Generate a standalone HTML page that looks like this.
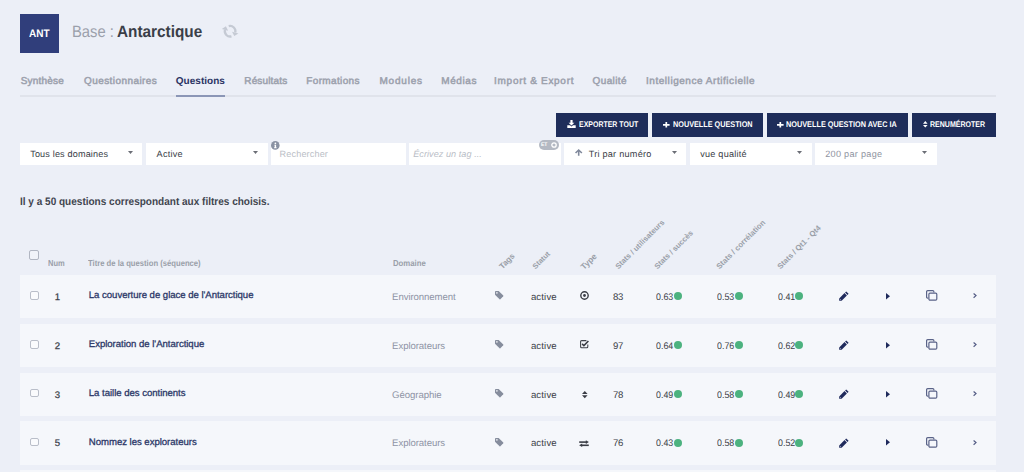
<!DOCTYPE html><html><head><meta charset="utf-8"><style>
html,body{margin:0;padding:0;width:1024px;height:472px;overflow:hidden;background:#eceff7;}
body{position:relative;font-family:"Liberation Sans", sans-serif;text-rendering:geometricPrecision;}
.t{position:absolute;line-height:0;white-space:nowrap;}
.b{position:absolute;}
svg{position:absolute;overflow:visible;}
</style></head><body>
<div class="b" style="left:20.3px;top:14.3px;width:38.3px;height:38.3px;background:#303e7b"></div>
<svg style="left:219px;top:22px" width="22" height="18" viewBox="0 0 22 18"><g fill="none" stroke="#c5cad4" stroke-width="2.3"><path d="M9.73 4.08 A5.3 5.3 0 0 1 16.22 10.57"/><path d="M12.47 14.32 A5.3 5.3 0 0 1 5.98 7.83"/></g><g fill="#c5cad4"><path d="M19.41 11.42 L13.03 9.72 L15.29 14.05 Z"/><path d="M2.79 6.98 L9.17 8.68 L6.91 4.35 Z"/></g></svg>
<div class="b" style="left:20px;top:95.2px;width:976px;height:1.6px;background:#e0e3eb"></div>
<div class="b" style="left:175.5px;top:94.8px;width:49.5px;height:2px;background:#8b96b6"></div>
<div class="b" style="left:556.4px;top:112.8px;width:91.8px;height:23.8px;background:#1e2d5a"></div>
<div class="b" style="left:652px;top:112.8px;width:110.9px;height:23.8px;background:#1e2d5a"></div>
<div class="b" style="left:766.6px;top:112.8px;width:141.4px;height:23.8px;background:#1e2d5a"></div>
<div class="b" style="left:912px;top:112.8px;width:84.0px;height:23.8px;background:#1e2d5a"></div>
<svg style="left:567px;top:119.5px" width="9" height="8" viewBox="0 0 9 8"><path d="M3.4 0 H5.6 V2.8 H7.4 L4.5 5.6 L1.6 2.8 H3.4 Z" fill="#fff"/><path d="M0.3 5.3 H3 L4.5 6.6 L6 5.3 H8.7 V8 H0.3 Z" fill="#fff"/></svg>
<svg style="left:662.7px;top:121.6px" width="6.6" height="5.6" viewBox="0 0 6.6 5.6"><path d="M2.45 0 H4.15 V1.95 H6.6 V3.65 H4.15 V5.6 H2.45 V3.65 H0 V1.95 H2.45 Z" fill="#fff"/></svg>
<svg style="left:777px;top:121.6px" width="6.6" height="5.6" viewBox="0 0 6.6 5.6"><path d="M2.45 0 H4.15 V1.95 H6.6 V3.65 H4.15 V5.6 H2.45 V3.65 H0 V1.95 H2.45 Z" fill="#fff"/></svg>
<svg style="left:922.8px;top:120.8px" width="4.6" height="6.6" viewBox="0 0 4.6 6.6"><path d="M2.3 0 L4.6 2.7 H0 Z M0 3.9 H4.6 L2.3 6.6 Z" fill="#fff"/></svg>
<div class="b" style="left:20.1px;top:142.8px;width:121.80px;height:22.2px;background:#fff"></div>
<div class="b" style="left:145.9px;top:142.8px;width:122.17px;height:22.2px;background:#fff"></div>
<div class="b" style="left:270.8px;top:142.8px;width:135.20px;height:22.2px;background:#fff"></div>
<div class="b" style="left:408.8px;top:142.8px;width:151.90px;height:22.2px;background:#fff"></div>
<div class="b" style="left:563.9px;top:142.8px;width:121.70px;height:22.2px;background:#fff"></div>
<div class="b" style="left:690.1px;top:142.8px;width:121.70px;height:22.2px;background:#fff"></div>
<div class="b" style="left:814.5px;top:142.8px;width:122.00px;height:22.2px;background:#fff"></div>
<svg style="left:127.8px;top:150.8px" width="5" height="3" viewBox="0 0 5 3"><path d="M0 0 H5 L2.5 3 Z" fill="#6b6e76"/></svg>
<svg style="left:253.2px;top:150.8px" width="5" height="3" viewBox="0 0 5 3"><path d="M0 0 H5 L2.5 3 Z" fill="#6b6e76"/></svg>
<svg style="left:671.8px;top:150.8px" width="5" height="3" viewBox="0 0 5 3"><path d="M0 0 H5 L2.5 3 Z" fill="#6b6e76"/></svg>
<svg style="left:796.9px;top:150.8px" width="5" height="3" viewBox="0 0 5 3"><path d="M0 0 H5 L2.5 3 Z" fill="#6b6e76"/></svg>
<svg style="left:922.2px;top:150.8px" width="5" height="3" viewBox="0 0 5 3"><path d="M0 0 H5 L2.5 3 Z" fill="#6b6e76"/></svg>
<svg style="left:271px;top:141px" width="8.6" height="8.8" viewBox="0 0 10 10"><circle cx="5" cy="5" r="5" fill="#8a92a3"/><circle cx="5.1" cy="2.6" r="1" fill="#fff"/><path d="M3.9 4.2 H5.9 V7.2 H6.5 V8.2 H3.6 V7.2 H4.3 V5.2 H3.9 Z" fill="#fff"/></svg>
<div class="b" style="left:538.6px;top:139.7px;width:20.6px;height:10.1px;border-radius:5px;background:#b4b9c3"></div>
<div class="t" style="left:541px;top:144.8px;font-size:5px;font-weight:700;color:#fff;letter-spacing:-0.2px">ET</div>
<svg style="left:551px;top:141.6px" width="6" height="6" viewBox="0 0 6 6"><circle cx="3" cy="3" r="2.2" fill="none" stroke="#fff" stroke-width="1.3"/></svg>
<svg style="left:574.5px;top:149px" width="7.4" height="6.8" viewBox="0 0 7.4 6.8"><path d="M3.7 0 L7.4 3.5 L6.3 4.5 L4.5 2.8 V6.8 H2.9 V2.8 L1.1 4.5 L0 3.5 Z" fill="#7f889b"/></svg>
<div class="b" style="left:29.2px;top:250.2px;width:9.9px;height:9.7px;box-sizing:border-box;border:1.1px solid #b1b6c2;border-radius:2px;background:#f1f3f9"></div>
<div class="t" style="left:29.40px;top:34.00px;font-size:10.8px;color:#ffffff;transform:scaleX(0.9273);transform-origin:0 0;font-weight:700;">ANT</div>
<div class="t" style="left:71.90px;top:32.00px;font-size:16.5px;color:#9ba0ab;transform:scaleX(0.8956);transform-origin:0 0;">Base :</div>
<div class="t" style="left:117.47px;top:32.00px;font-size:16.5px;color:#3a3e48;transform:scaleX(0.9289);transform-origin:0 0;font-weight:700;">Antarctique</div>
<div class="t" style="left:20.70px;top:82.30px;font-size:10.0px;color:#9ca1ad;letter-spacing:0.214px;-webkit-text-stroke:0.5px #9ca1ad;">Synthèse</div>
<div class="t" style="left:84.00px;top:82.30px;font-size:10.0px;color:#9ca1ad;letter-spacing:0.423px;-webkit-text-stroke:0.5px #9ca1ad;">Questionnaires</div>
<div class="t" style="left:175.75px;top:82.30px;font-size:10.0px;color:#2b3464;letter-spacing:0.032px;font-weight:700;">Questions</div>
<div class="t" style="left:244.25px;top:82.30px;font-size:10.0px;color:#9ca1ad;letter-spacing:0.157px;-webkit-text-stroke:0.5px #9ca1ad;">Résultats</div>
<div class="t" style="left:306.25px;top:82.30px;font-size:10.0px;color:#9ca1ad;letter-spacing:0.361px;-webkit-text-stroke:0.5px #9ca1ad;">Formations</div>
<div class="t" style="left:379.50px;top:82.30px;font-size:10.0px;color:#9ca1ad;letter-spacing:0.792px;-webkit-text-stroke:0.5px #9ca1ad;">Modules</div>
<div class="t" style="left:441.25px;top:82.30px;font-size:10.0px;color:#9ca1ad;letter-spacing:0.6px;-webkit-text-stroke:0.5px #9ca1ad;">Médias</div>
<div class="t" style="left:494.10px;top:82.30px;font-size:10.0px;color:#9ca1ad;letter-spacing:0.706px;-webkit-text-stroke:0.5px #9ca1ad;">Import &amp; Export</div>
<div class="t" style="left:592.60px;top:82.30px;font-size:10.0px;color:#9ca1ad;letter-spacing:0.367px;-webkit-text-stroke:0.5px #9ca1ad;">Qualité</div>
<div class="t" style="left:646.00px;top:82.30px;font-size:10.0px;color:#9ca1ad;letter-spacing:0.542px;-webkit-text-stroke:0.5px #9ca1ad;">Intelligence Artificielle</div>
<div class="t" style="left:578.60px;top:125.10px;font-size:8.2px;color:#ffffff;transform:scaleX(0.8522);transform-origin:0 0;font-weight:700;">EXPORTER TOUT</div>
<div class="t" style="left:672.60px;top:125.10px;font-size:8.2px;color:#ffffff;transform:scaleX(0.8876);transform-origin:0 0;font-weight:700;">NOUVELLE QUESTION</div>
<div class="t" style="left:786.40px;top:125.10px;font-size:8.2px;color:#ffffff;transform:scaleX(0.8919);transform-origin:0 0;font-weight:700;">NOUVELLE QUESTION AVEC IA</div>
<div class="t" style="left:930.00px;top:125.10px;font-size:8.2px;color:#ffffff;transform:scaleX(0.8594);transform-origin:0 0;font-weight:700;">RENUMÉROTER</div>
<div class="t" style="left:30.20px;top:153.90px;font-size:9.1px;color:#393d47;letter-spacing:0.156px;">Tous les domaines</div>
<div class="t" style="left:156.60px;top:153.90px;font-size:9.1px;color:#393d47;letter-spacing:0.22px;">Active</div>
<div class="t" style="left:279.60px;top:154.00px;font-size:9.1px;color:#babec6;letter-spacing:0.144px;">Rechercher</div>
<div class="t" style="left:413.20px;top:154.00px;font-size:9.1px;color:#b9bdc6;letter-spacing:0.054px;font-style:italic;">Écrivez un tag ...</div>
<div class="t" style="left:588.70px;top:153.90px;font-size:9.1px;color:#393d47;letter-spacing:0.254px;">Tri par numéro</div>
<div class="t" style="left:700.20px;top:153.90px;font-size:9.1px;color:#393d47;letter-spacing:0.24px;">vue qualité</div>
<div class="t" style="left:825.20px;top:153.90px;font-size:9.1px;color:#8f949f;letter-spacing:0.3px;">200 par page</div>
<div class="t" style="left:19.88px;top:201.70px;font-size:10.9px;color:#41454f;transform:scaleX(0.92);transform-origin:0 0;font-weight:700;">Il y a 50 questions correspondant aux filtres choisis.</div>
<div class="t" style="left:47.90px;top:263.30px;font-size:8.6px;color:#9a9fa9;transform:scaleX(0.8737);transform-origin:0 0;font-weight:700;">Num</div>
<div class="t" style="left:88.40px;top:263.30px;font-size:8.6px;color:#9a9fa9;transform:scaleX(0.8913);transform-origin:0 0;font-weight:700;">Titre de la question (séquence)</div>
<div class="t" style="left:392.70px;top:263.40px;font-size:8.6px;color:#9a9fa9;transform:scaleX(0.9028);transform-origin:0 0;font-weight:700;">Domaine</div>
<div class="b" style="left:500.6px;top:268.2px;width:0;height:0;transform:rotate(-45deg);transform-origin:0 0"><div class="t" style="left:0;top:0;font-weight:700;font-size:8.04px;color:#9a9fa9">Tags</div></div>
<div class="b" style="left:534.4px;top:268.0px;width:0;height:0;transform:rotate(-45deg);transform-origin:0 0"><div class="t" style="left:0;top:0;font-weight:700;font-size:7.528px;color:#9a9fa9">Statut</div></div>
<div class="b" style="left:582.0px;top:268.2px;width:0;height:0;transform:rotate(-45deg);transform-origin:0 0"><div class="t" style="left:0;top:0;font-weight:700;font-size:8.307px;color:#9a9fa9">Type</div></div>
<div class="b" style="left:616.6px;top:268.4px;width:0;height:0;transform:rotate(-45deg);transform-origin:0 0"><div class="t" style="left:0;top:0;font-weight:700;font-size:7.658px;color:#9a9fa9">Stats / utilisateurs</div></div>
<div class="b" style="left:656.0px;top:268.4px;width:0;height:0;transform:rotate(-45deg);transform-origin:0 0"><div class="t" style="left:0;top:0;font-weight:700;font-size:7.658px;color:#9a9fa9">Stats / succès</div></div>
<div class="b" style="left:717.8px;top:268.4px;width:0;height:0;transform:rotate(-45deg);transform-origin:0 0"><div class="t" style="left:0;top:0;font-weight:700;font-size:7.779px;color:#9a9fa9">Stats / corrélation</div></div>
<div class="b" style="left:779.2px;top:268.4px;width:0;height:0;transform:rotate(-45deg);transform-origin:0 0"><div class="t" style="left:0;top:0;font-weight:700;font-size:7.723px;color:#9a9fa9">Stats / Qt1 - Qt4</div></div>
<div class="b" style="left:20.2px;top:274.60px;width:975.9px;height:43.1px;background:#f5f7fb"></div>
<div class="b" style="left:30.1px;top:291.20px;width:8.5px;height:8.4px;box-sizing:border-box;border:1.1px solid #b9bec9;border-radius:2px;background:#fafbfd"></div>
<div class="t" style="left:54.80px;top:297.60px;font-size:9.6px;color:#3a3e4a;-webkit-text-stroke:0.25px #3a3e4a;">1</div>
<div class="t" style="left:88.80px;top:296.10px;font-size:9.6px;color:#2c3868;letter-spacing:-0.037px;-webkit-text-stroke:0.3px #2c3868;">La couverture de glace de l'Antarctique</div>
<div class="t" style="left:392.10px;top:297.60px;font-size:9.6px;color:#8e94a5;letter-spacing:-0.075px;">Environnement</div>
<div class="t" style="left:530.90px;top:297.60px;font-size:9.6px;color:#3b3e47;letter-spacing:0.14px;">active</div>
<div class="t" style="left:612.90px;top:297.60px;font-size:9.6px;color:#3b3e47;letter-spacing:-0.3px;">83</div>
<div class="t" style="left:656.40px;top:297.60px;font-size:9.6px;color:#3b3e47;transform:scaleX(0.9222);transform-origin:0 0;">0.63</div>
<div class="t" style="left:716.90px;top:297.60px;font-size:9.6px;color:#3b3e47;transform:scaleX(0.9222);transform-origin:0 0;">0.53</div>
<div class="t" style="left:778.10px;top:297.60px;font-size:9.6px;color:#3b3e47;transform:scaleX(0.9222);transform-origin:0 0;">0.41</div>
<div class="b" style="left:673.6px;top:291.70px;width:8.3px;height:8.3px;border-radius:50%;background:#4cb27f"></div>
<div class="b" style="left:734.5px;top:291.70px;width:8.3px;height:8.3px;border-radius:50%;background:#4cb27f"></div>
<div class="b" style="left:794.9px;top:291.70px;width:8.3px;height:8.3px;border-radius:50%;background:#4cb27f"></div>
<svg style="left:494.6px;top:290.80px" width="8.6" height="8.6" viewBox="0 0 10 10"><path d="M0 0.9 Q0 0 0.9 0 H4.3 L9.6 5.3 Q10 5.8 9.6 6.2 L6.2 9.6 Q5.8 10 5.3 9.6 L0 4.3 Z" fill="#868d9d"/><circle cx="2.2" cy="2.2" r="0.9" fill="#f5f7fb"/></svg>
<svg style="left:580px;top:290.90px" width="9" height="9" viewBox="0 0 9 9"><circle cx="4.5" cy="4.5" r="3.7" fill="none" stroke="#3a3d45" stroke-width="1.4"/><circle cx="4.5" cy="4.5" r="1.4" fill="#3a3d45"/></svg>
<svg style="left:839.4px;top:290.70px" width="10" height="10" viewBox="0 0 10 10"><path d="M7.2 0.4 L9.6 2.8 L8.5 3.9 L6.1 1.5 Z" fill="#1f2a5c"/><path d="M5.5 2.1 L7.9 4.5 L2.6 9.8 L0.2 9.8 L0.2 7.4 Z" fill="#1f2a5c"/><path d="M1.1 8.1 L1.9 8.9" stroke="#f5f7fb" stroke-width="0.6"/></svg>
<svg style="left:885.7px;top:292.60px" width="4" height="6.4" viewBox="0 0 4 6.4"><path d="M0 0 L4 3.2 L0 6.4 Z" fill="#1f2a5c"/></svg>
<svg style="left:925.8px;top:290.10px" width="11.4" height="10.8" viewBox="0 0 11.4 10.8"><path d="M2.3 8.1 H1.7 Q0.6 8.1 0.6 7 V1.7 Q0.6 0.6 1.7 0.6 H6.8 Q7.9 0.6 7.9 1.7 V2.6" fill="none" stroke="#5a6388" stroke-width="1.2"/><rect x="2.9" y="3.2" width="7.9" height="7" rx="1.1" fill="none" stroke="#5a6388" stroke-width="1.2"/></svg>
<svg style="left:972.6px;top:292.80px" width="3.8" height="5.2" viewBox="0 0 3.8 5.2"><path d="M0.6 0.5 L3 2.6 L0.6 4.7" fill="none" stroke="#525b84" stroke-width="1.2"/></svg>
<div class="b" style="left:20.2px;top:323.55px;width:975.9px;height:43.1px;background:#f5f7fb"></div>
<div class="b" style="left:30.1px;top:340.15px;width:8.5px;height:8.4px;box-sizing:border-box;border:1.1px solid #b9bec9;border-radius:2px;background:#fafbfd"></div>
<div class="t" style="left:54.80px;top:346.55px;font-size:9.6px;color:#3a3e4a;-webkit-text-stroke:0.25px #3a3e4a;">2</div>
<div class="t" style="left:88.80px;top:345.05px;font-size:9.6px;color:#2c3868;letter-spacing:-0.037px;-webkit-text-stroke:0.3px #2c3868;">Exploration de l'Antarctique</div>
<div class="t" style="left:392.10px;top:346.55px;font-size:9.6px;color:#8e94a5;letter-spacing:-0.075px;">Explorateurs</div>
<div class="t" style="left:530.90px;top:346.55px;font-size:9.6px;color:#3b3e47;letter-spacing:0.14px;">active</div>
<div class="t" style="left:612.90px;top:346.55px;font-size:9.6px;color:#3b3e47;letter-spacing:-0.3px;">97</div>
<div class="t" style="left:656.40px;top:346.55px;font-size:9.6px;color:#3b3e47;transform:scaleX(0.9222);transform-origin:0 0;">0.64</div>
<div class="t" style="left:716.90px;top:346.55px;font-size:9.6px;color:#3b3e47;transform:scaleX(0.9222);transform-origin:0 0;">0.76</div>
<div class="t" style="left:778.10px;top:346.55px;font-size:9.6px;color:#3b3e47;transform:scaleX(0.9222);transform-origin:0 0;">0.62</div>
<div class="b" style="left:673.6px;top:340.65px;width:8.3px;height:8.3px;border-radius:50%;background:#4cb27f"></div>
<div class="b" style="left:734.5px;top:340.65px;width:8.3px;height:8.3px;border-radius:50%;background:#4cb27f"></div>
<div class="b" style="left:794.9px;top:340.65px;width:8.3px;height:8.3px;border-radius:50%;background:#4cb27f"></div>
<svg style="left:494.6px;top:339.75px" width="8.6" height="8.6" viewBox="0 0 10 10"><path d="M0 0.9 Q0 0 0.9 0 H4.3 L9.6 5.3 Q10 5.8 9.6 6.2 L6.2 9.6 Q5.8 10 5.3 9.6 L0 4.3 Z" fill="#868d9d"/><circle cx="2.2" cy="2.2" r="0.9" fill="#f5f7fb"/></svg>
<svg style="left:580px;top:339.90px" width="9" height="9" viewBox="0 0 9 9"><path d="M6.4 0.6 H1.6 Q0.6 0.6 0.6 1.6 V6.8 Q0.6 7.8 1.6 7.8 H6.8 Q7.8 7.8 7.8 6.8 V4.4" fill="none" stroke="#3f4249" stroke-width="1.05"/><path d="M2.1 3.9 L3.9 5.6 L8.4 1.0" fill="none" stroke="#3a3d45" stroke-width="1.6"/></svg>
<svg style="left:839.4px;top:339.65px" width="10" height="10" viewBox="0 0 10 10"><path d="M7.2 0.4 L9.6 2.8 L8.5 3.9 L6.1 1.5 Z" fill="#1f2a5c"/><path d="M5.5 2.1 L7.9 4.5 L2.6 9.8 L0.2 9.8 L0.2 7.4 Z" fill="#1f2a5c"/><path d="M1.1 8.1 L1.9 8.9" stroke="#f5f7fb" stroke-width="0.6"/></svg>
<svg style="left:885.7px;top:341.55px" width="4" height="6.4" viewBox="0 0 4 6.4"><path d="M0 0 L4 3.2 L0 6.4 Z" fill="#1f2a5c"/></svg>
<svg style="left:925.8px;top:339.05px" width="11.4" height="10.8" viewBox="0 0 11.4 10.8"><path d="M2.3 8.1 H1.7 Q0.6 8.1 0.6 7 V1.7 Q0.6 0.6 1.7 0.6 H6.8 Q7.9 0.6 7.9 1.7 V2.6" fill="none" stroke="#5a6388" stroke-width="1.2"/><rect x="2.9" y="3.2" width="7.9" height="7" rx="1.1" fill="none" stroke="#5a6388" stroke-width="1.2"/></svg>
<svg style="left:972.6px;top:341.75px" width="3.8" height="5.2" viewBox="0 0 3.8 5.2"><path d="M0.6 0.5 L3 2.6 L0.6 4.7" fill="none" stroke="#525b84" stroke-width="1.2"/></svg>
<div class="b" style="left:20.2px;top:372.50px;width:975.9px;height:43.1px;background:#f5f7fb"></div>
<div class="b" style="left:30.1px;top:389.10px;width:8.5px;height:8.4px;box-sizing:border-box;border:1.1px solid #b9bec9;border-radius:2px;background:#fafbfd"></div>
<div class="t" style="left:54.80px;top:395.50px;font-size:9.6px;color:#3a3e4a;-webkit-text-stroke:0.25px #3a3e4a;">3</div>
<div class="t" style="left:88.80px;top:394.00px;font-size:9.6px;color:#2c3868;letter-spacing:-0.037px;-webkit-text-stroke:0.3px #2c3868;">La taille des continents</div>
<div class="t" style="left:392.10px;top:395.50px;font-size:9.6px;color:#8e94a5;letter-spacing:-0.075px;">Géographie</div>
<div class="t" style="left:530.90px;top:395.50px;font-size:9.6px;color:#3b3e47;letter-spacing:0.14px;">active</div>
<div class="t" style="left:612.90px;top:395.50px;font-size:9.6px;color:#3b3e47;letter-spacing:-0.3px;">78</div>
<div class="t" style="left:656.40px;top:395.50px;font-size:9.6px;color:#3b3e47;transform:scaleX(0.9222);transform-origin:0 0;">0.49</div>
<div class="t" style="left:716.90px;top:395.50px;font-size:9.6px;color:#3b3e47;transform:scaleX(0.9222);transform-origin:0 0;">0.58</div>
<div class="t" style="left:778.10px;top:395.50px;font-size:9.6px;color:#3b3e47;transform:scaleX(0.9222);transform-origin:0 0;">0.49</div>
<div class="b" style="left:673.6px;top:389.60px;width:8.3px;height:8.3px;border-radius:50%;background:#4cb27f"></div>
<div class="b" style="left:734.5px;top:389.60px;width:8.3px;height:8.3px;border-radius:50%;background:#4cb27f"></div>
<div class="b" style="left:794.9px;top:389.60px;width:8.3px;height:8.3px;border-radius:50%;background:#4cb27f"></div>
<svg style="left:494.6px;top:388.70px" width="8.6" height="8.6" viewBox="0 0 10 10"><path d="M0 0.9 Q0 0 0.9 0 H4.3 L9.6 5.3 Q10 5.8 9.6 6.2 L6.2 9.6 Q5.8 10 5.3 9.6 L0 4.3 Z" fill="#868d9d"/><circle cx="2.2" cy="2.2" r="0.9" fill="#f5f7fb"/></svg>
<svg style="left:581.6px;top:390.80px" width="5.6" height="7.2" viewBox="0 0 5.6 7.2"><path d="M2.8 0 L5.6 3 H0 Z M0 4.2 H5.6 L2.8 7.2 Z" fill="#3a3d45"/></svg>
<svg style="left:839.4px;top:388.60px" width="10" height="10" viewBox="0 0 10 10"><path d="M7.2 0.4 L9.6 2.8 L8.5 3.9 L6.1 1.5 Z" fill="#1f2a5c"/><path d="M5.5 2.1 L7.9 4.5 L2.6 9.8 L0.2 9.8 L0.2 7.4 Z" fill="#1f2a5c"/><path d="M1.1 8.1 L1.9 8.9" stroke="#f5f7fb" stroke-width="0.6"/></svg>
<svg style="left:885.7px;top:390.50px" width="4" height="6.4" viewBox="0 0 4 6.4"><path d="M0 0 L4 3.2 L0 6.4 Z" fill="#1f2a5c"/></svg>
<svg style="left:925.8px;top:388.00px" width="11.4" height="10.8" viewBox="0 0 11.4 10.8"><path d="M2.3 8.1 H1.7 Q0.6 8.1 0.6 7 V1.7 Q0.6 0.6 1.7 0.6 H6.8 Q7.9 0.6 7.9 1.7 V2.6" fill="none" stroke="#5a6388" stroke-width="1.2"/><rect x="2.9" y="3.2" width="7.9" height="7" rx="1.1" fill="none" stroke="#5a6388" stroke-width="1.2"/></svg>
<svg style="left:972.6px;top:390.70px" width="3.8" height="5.2" viewBox="0 0 3.8 5.2"><path d="M0.6 0.5 L3 2.6 L0.6 4.7" fill="none" stroke="#525b84" stroke-width="1.2"/></svg>
<div class="b" style="left:20.2px;top:421.45px;width:975.9px;height:43.1px;background:#f5f7fb"></div>
<div class="b" style="left:30.1px;top:438.05px;width:8.5px;height:8.4px;box-sizing:border-box;border:1.1px solid #b9bec9;border-radius:2px;background:#fafbfd"></div>
<div class="t" style="left:54.80px;top:444.45px;font-size:9.6px;color:#3a3e4a;-webkit-text-stroke:0.25px #3a3e4a;">5</div>
<div class="t" style="left:88.80px;top:442.95px;font-size:9.6px;color:#2c3868;letter-spacing:-0.037px;-webkit-text-stroke:0.3px #2c3868;">Nommez les explorateurs</div>
<div class="t" style="left:392.10px;top:444.45px;font-size:9.6px;color:#8e94a5;letter-spacing:-0.075px;">Explorateurs</div>
<div class="t" style="left:530.90px;top:444.45px;font-size:9.6px;color:#3b3e47;letter-spacing:0.14px;">active</div>
<div class="t" style="left:612.90px;top:444.45px;font-size:9.6px;color:#3b3e47;letter-spacing:-0.3px;">76</div>
<div class="t" style="left:656.40px;top:444.45px;font-size:9.6px;color:#3b3e47;transform:scaleX(0.9222);transform-origin:0 0;">0.43</div>
<div class="t" style="left:716.90px;top:444.45px;font-size:9.6px;color:#3b3e47;transform:scaleX(0.9222);transform-origin:0 0;">0.58</div>
<div class="t" style="left:778.10px;top:444.45px;font-size:9.6px;color:#3b3e47;transform:scaleX(0.9222);transform-origin:0 0;">0.52</div>
<div class="b" style="left:673.6px;top:438.55px;width:8.3px;height:8.3px;border-radius:50%;background:#4cb27f"></div>
<div class="b" style="left:734.5px;top:438.55px;width:8.3px;height:8.3px;border-radius:50%;background:#4cb27f"></div>
<div class="b" style="left:794.9px;top:438.55px;width:8.3px;height:8.3px;border-radius:50%;background:#4cb27f"></div>
<svg style="left:494.6px;top:437.65px" width="8.6" height="8.6" viewBox="0 0 10 10"><path d="M0 0.9 Q0 0 0.9 0 H4.3 L9.6 5.3 Q10 5.8 9.6 6.2 L6.2 9.6 Q5.8 10 5.3 9.6 L0 4.3 Z" fill="#868d9d"/><circle cx="2.2" cy="2.2" r="0.9" fill="#f5f7fb"/></svg>
<svg style="left:579.2px;top:439.60px" width="10" height="7.2" viewBox="0 0 10 7.2"><path d="M0.2 2.1 H7.6" stroke="#3a3d45" stroke-width="1.6"/><path d="M6.8 0.3 L9.9 2.1 L6.8 3.9 Z" fill="#3a3d45"/><path d="M2.4 5.3 H9.8" stroke="#3a3d45" stroke-width="1.6"/><path d="M3.2 3.5 L0.1 5.3 L3.2 7.1 Z" fill="#3a3d45"/></svg>
<svg style="left:839.4px;top:437.55px" width="10" height="10" viewBox="0 0 10 10"><path d="M7.2 0.4 L9.6 2.8 L8.5 3.9 L6.1 1.5 Z" fill="#1f2a5c"/><path d="M5.5 2.1 L7.9 4.5 L2.6 9.8 L0.2 9.8 L0.2 7.4 Z" fill="#1f2a5c"/><path d="M1.1 8.1 L1.9 8.9" stroke="#f5f7fb" stroke-width="0.6"/></svg>
<svg style="left:885.7px;top:439.45px" width="4" height="6.4" viewBox="0 0 4 6.4"><path d="M0 0 L4 3.2 L0 6.4 Z" fill="#1f2a5c"/></svg>
<svg style="left:925.8px;top:436.95px" width="11.4" height="10.8" viewBox="0 0 11.4 10.8"><path d="M2.3 8.1 H1.7 Q0.6 8.1 0.6 7 V1.7 Q0.6 0.6 1.7 0.6 H6.8 Q7.9 0.6 7.9 1.7 V2.6" fill="none" stroke="#5a6388" stroke-width="1.2"/><rect x="2.9" y="3.2" width="7.9" height="7" rx="1.1" fill="none" stroke="#5a6388" stroke-width="1.2"/></svg>
<svg style="left:972.6px;top:439.65px" width="3.8" height="5.2" viewBox="0 0 3.8 5.2"><path d="M0.6 0.5 L3 2.6 L0.6 4.7" fill="none" stroke="#525b84" stroke-width="1.2"/></svg>
<div class="b" style="left:20.2px;top:470.40px;width:975.9px;height:43.1px;background:#f5f7fb"></div>
</body></html>
